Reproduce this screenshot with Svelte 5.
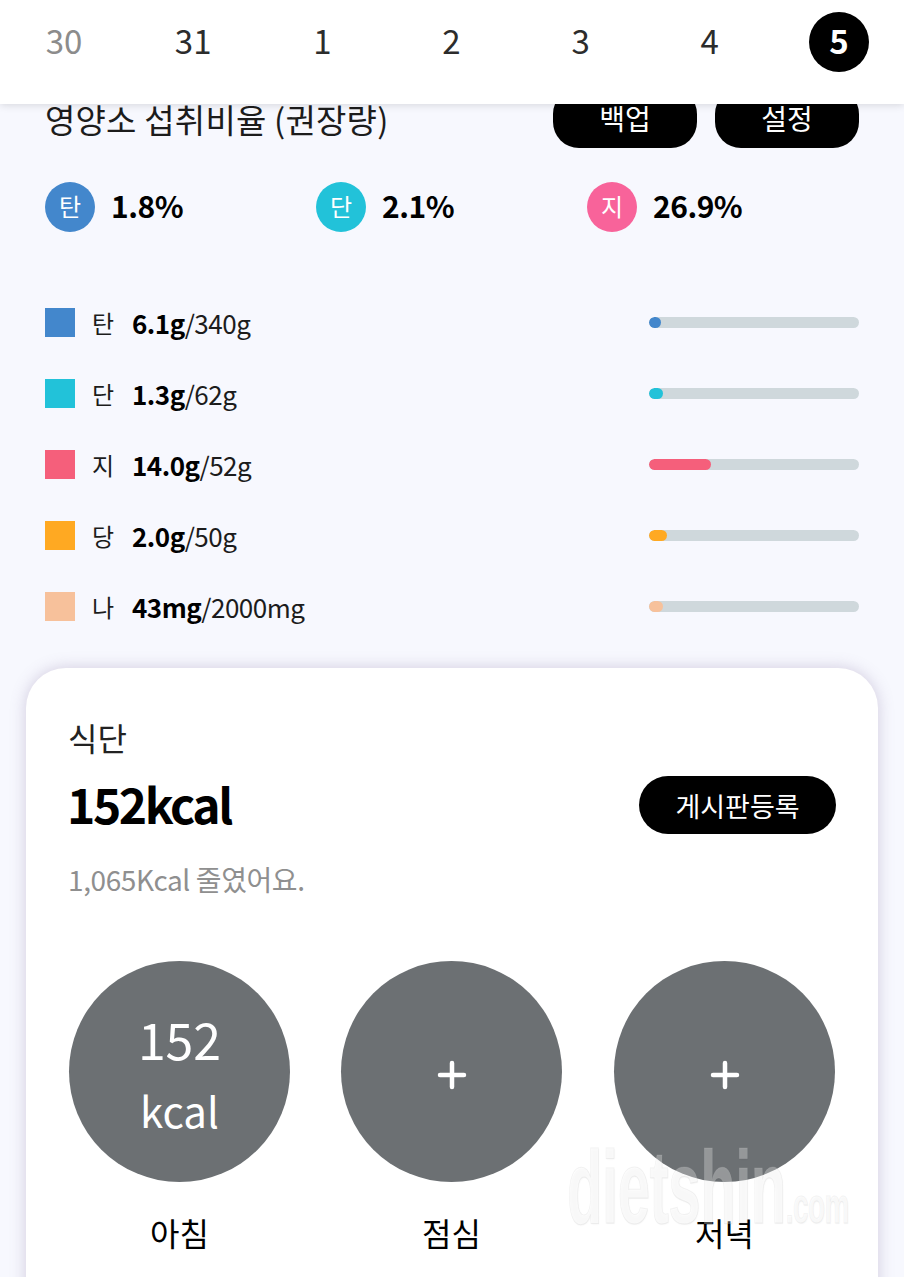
<script lang="ts">
    const dates = [
        { label: "30", muted: true },
        { label: "31" },
        { label: "1" },
        { label: "2" },
        { label: "3" },
        { label: "4" },
        { label: "5", active: true },
    ];

    const ratios = [
        { name: "탄", value: "1.8%", color: "#4387cc" },
        { name: "단", value: "2.1%", color: "#22c2d9" },
        { name: "지", value: "26.9%", color: "#f8639a" },
    ];

    // fill is the bar length in px of a 210px track
    const nutrients = [
        { name: "탄", amount: "6.1g", goal: "/340g", color: "#4387cc", fill: 12 },
        { name: "단", amount: "1.3g", goal: "/62g", color: "#22c2d9", fill: 14 },
        { name: "지", amount: "14.0g", goal: "/52g", color: "#f55f7b", fill: 62 },
        { name: "당", amount: "2.0g", goal: "/50g", color: "#ffa922", fill: 18 },
        { name: "나", amount: "43mg", goal: "/2000mg", color: "#f7c19b", fill: 14 },
    ];

    const meals = [
        { name: "아침", kcal: "152" },
        { name: "점심" },
        { name: "저녁" },
    ];
</script>

<div class="page">
    <header class="dates">
        {#each dates as d}
            <span class="date" class:muted={d.muted} class:active={d.active}>{d.label}</span>
        {/each}
    </header>

    <main>
        <section class="summary">
            <div class="title-row">
                <h2>영양소 섭취비율 (권장량)</h2>
                <div class="actions">
                    <button class="pill small">백업</button>
                    <button class="pill small">설정</button>
                </div>
            </div>

            <div class="ratios">
                {#each ratios as r}
                    <div class="ratio">
                        <span class="dot" style:background={r.color}>{r.name}</span>
                        <strong>{r.value}</strong>
                    </div>
                {/each}
            </div>

            <ul class="nutrients">
                {#each nutrients as n}
                    <li>
                        <span class="swatch" style:background={n.color}></span>
                        <span class="name">{n.name}</span>
                        <span class="amount"><b>{n.amount}</b>{n.goal}</span>
                        <span class="track">
                            <span class="fill" style:width="{n.fill}px" style:background={n.color}></span>
                        </span>
                    </li>
                {/each}
            </ul>
        </section>

        <section class="card">
            <h3>식단</h3>
            <div class="total-row">
                <strong class="total">152kcal</strong>
                <button class="pill post">게시판등록</button>
            </div>
            <p class="note">1,065Kcal 줄였어요.</p>

            <div class="meals">
                {#each meals as m}
                    <div class="meal">
                        <div class="circle">
                            {#if m.kcal}
                                <span class="kcal-num">{m.kcal}</span>
                                <span class="kcal-unit">kcal</span>
                            {:else}
                                <svg class="plus" width="30" height="30" viewBox="0 0 30 30" aria-hidden="true">
                                    <path d="M15 3v24M3 15h24" stroke="#fff" stroke-width="4.5" stroke-linecap="round" />
                                </svg>
                            {/if}
                        </div>
                        <span class="meal-name">{m.name}</span>
                    </div>
                {/each}
            </div>
        </section>
    </main>

    <span class="watermark">dietshin<small>.com</small></span>
</div>

<style>
    :global(body) {
        margin: 0;
        background: #f7f8fe;
    }

    .page {
        position: relative;
        height: 1277px;
        overflow: hidden;
        background: #f7f8fe;
        color: #000;
        font-family: "Noto Sans CJK KR", "Noto Sans", sans-serif;
    }

    .dates {
        position: absolute;
        top: 0;
        left: 0;
        right: 0;
        z-index: 2;
        height: 104px;
        box-sizing: border-box;
        padding: 12px 35px 0 34px;
        display: flex;
        justify-content: space-between;
        align-items: flex-start;
        background: #fff;
        box-shadow: 0 1px 8px rgba(0, 0, 0, 0.14);
    }
    .date {
        width: 60px;
        height: 60px;
        box-sizing: border-box;
        padding-bottom: 4px;
        display: flex;
        align-items: center;
        justify-content: center;
        font-size: 33px;
        color: #2c2c2c;
    }
    .date.muted {
        color: #8c8c8c;
    }
    .date.active {
        border-radius: 50%;
        background: #000;
        color: #fff;
        font-weight: 700;
    }

    .summary {
        padding: 88px 45px 0;
    }
    .title-row {
        display: flex;
        justify-content: space-between;
        align-items: center;
        height: 60px;
    }
    h2 {
        margin: 2px 0 0;
        font-size: 33px;
        font-weight: 400;
        letter-spacing: 0.2px;
        color: #1c1c1c;
    }
    .actions {
        display: flex;
        gap: 18px;
    }
    .pill {
        border: 0;
        padding: 0;
        background: #000;
        color: #fff;
        font-family: inherit;
    }
    .pill.small {
        width: 144px;
        height: 60px;
        border-radius: 26px;
        font-size: 28px;
    }

    .ratios {
        display: grid;
        grid-template-columns: repeat(3, 271px);
        margin-top: 34px;
    }
    .ratio {
        display: flex;
        align-items: center;
        gap: 16px;
    }
    .dot {
        width: 50px;
        height: 50px;
        box-sizing: border-box;
        padding-bottom: 3px;
        border-radius: 50%;
        display: flex;
        align-items: center;
        justify-content: center;
        color: #fff;
        font-size: 24px;
    }
    .ratio strong {
        padding-bottom: 5px;
        font-size: 30px;
        font-weight: 700;
        letter-spacing: -0.5px;
    }

    .nutrients {
        list-style: none;
        margin: 76px 0 0;
        padding: 0;
        display: flex;
        flex-direction: column;
        gap: 42px;
    }
    .nutrients li {
        display: flex;
        align-items: center;
        height: 29px;
    }
    .swatch {
        width: 30px;
        height: 29px;
        flex-shrink: 0;
    }
    .name {
        width: 40px;
        margin-left: 17px;
        font-size: 24px;
        color: #1c1c1c;
    }
    .amount {
        flex: 1;
        font-size: 26px;
        letter-spacing: -0.5px;
        color: #1c1c1c;
    }
    .amount b {
        font-weight: 700;
        color: #000;
    }
    .track {
        width: 210px;
        height: 11px;
        border-radius: 6px;
        background: #cfd8dc;
        overflow: hidden;
    }
    .fill {
        display: block;
        height: 100%;
        border-radius: 6px;
    }

    .card {
        margin: 47px 26px 0;
        height: 700px;
        box-sizing: border-box;
        padding: 46px 42px 0 43px;
        background: #fff;
        border-radius: 40px;
        box-shadow: 0 0 16px rgba(110, 90, 140, 0.28);
    }
    h3 {
        margin: 0 0 0 -1px;
        font-size: 32px;
        line-height: 46px;
        font-weight: 400;
        color: #222;
    }
    .total-row {
        display: flex;
        justify-content: space-between;
        align-items: center;
        margin-top: 16px;
        height: 58px;
    }
    .total {
        margin: -4px 0 0 -2px;
        font-size: 48px;
        font-weight: 700;
        letter-spacing: -2.4px;
    }
    .pill.post {
        width: 197px;
        height: 58px;
        border-radius: 29px;
        font-size: 27px;
    }
    .note {
        margin: 24px 0 0 -1px;
        font-size: 28px;
        line-height: 42px;
        letter-spacing: -0.4px;
        color: #8f8f8f;
    }
    .meals {
        display: grid;
        grid-template-columns: 272px 273px 221px;
        margin-top: 61px;
    }
    .meal {
        width: 221px;
        display: flex;
        flex-direction: column;
        align-items: center;
    }
    .circle {
        width: 221px;
        height: 221px;
        border-radius: 50%;
        background: #6c7073;
        color: #fff;
        display: flex;
        flex-direction: column;
        align-items: center;
        justify-content: center;
    }
    .plus {
        margin-top: 7px;
    }
    .kcal-num {
        font-size: 50px;
        line-height: 64px;
    }
    .kcal-unit {
        font-size: 42px;
        line-height: 56px;
        margin-top: 12px;
    }
    .meal-name {
        margin-top: 27px;
        font-size: 32px;
        line-height: 46px;
    }

    /* image watermark from the source site, sits over everything */
    .watermark {
        position: absolute;
        left: 567px;
        top: 1132px;
        z-index: 1;
        font-family: "Liberation Sans", sans-serif;
        font-size: 104px;
        font-weight: 700;
        line-height: 110px;
        letter-spacing: -1px;
        white-space: nowrap;
        color: rgba(255, 255, 255, 0.3);
        -webkit-text-stroke: 1px rgba(190, 190, 190, 0.2);
        text-shadow: 1px 1px 2px rgba(0, 0, 0, 0.04);
        transform: scaleX(0.56);
        transform-origin: left top;
        pointer-events: none;
    }
    .watermark small {
        font-size: 50px;
    }
</style>
